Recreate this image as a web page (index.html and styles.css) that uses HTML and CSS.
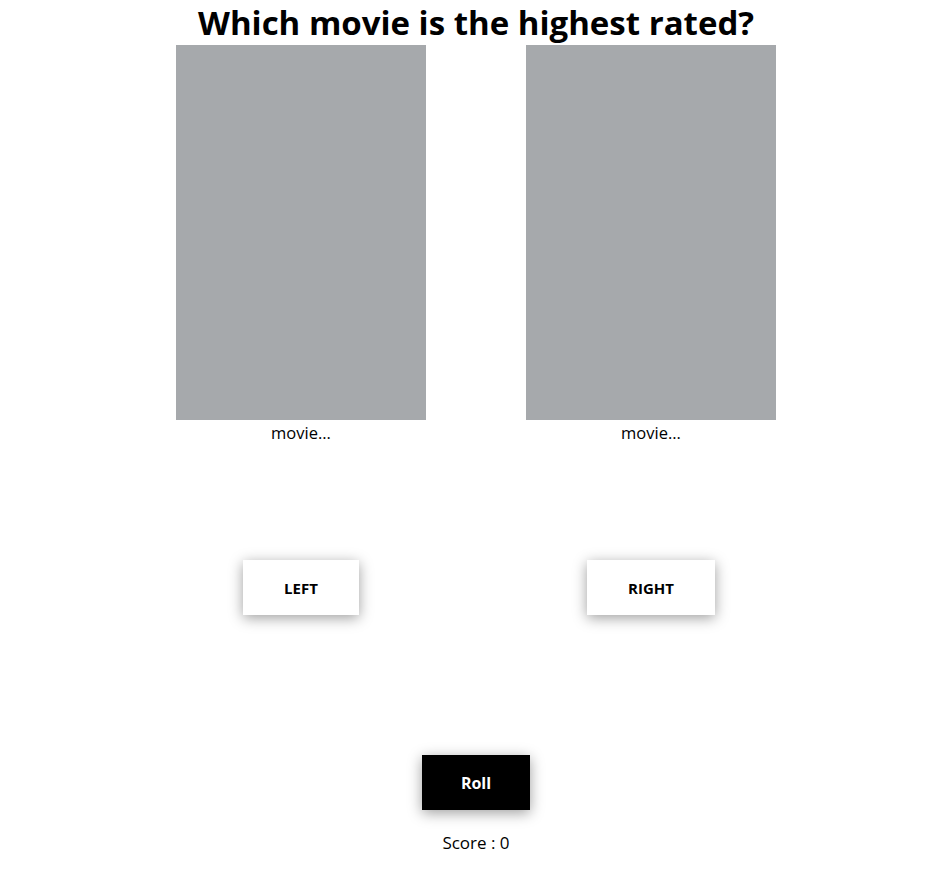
FILE: index.html
```html
<!DOCTYPE html>
<html lang="en">
<head>
<meta charset="utf-8">
<title>Which movie is the highest rated?</title>
<link rel="stylesheet" href="styles.css">
</head>
<body>
<main class="game">
  <h1 class="title">Which movie is the highest rated?</h1>
  <div class="cards">
    <div class="card">
      <div class="poster"></div>
      <p class="caption">movie...</p>
      <button class="pick">LEFT</button>
    </div>
    <div class="card">
      <div class="poster"></div>
      <p class="caption">movie...</p>
      <button class="pick">RIGHT</button>
    </div>
  </div>
  <button class="roll">Roll</button>
  <p class="score">Score : 0</p>
</main>
</body>
</html>
```

FILE: styles.css
```css
html, body {
  background: #ffffff;
}
body {
  margin: 0 0 0 8px;
  font-family: "Open Sans", "Noto Sans", sans-serif;
  color: #000;
}
.game {
  display: flex;
  flex-direction: column;
  align-items: center;
}
.title {
  margin: 0;
  font-size: 33px;
  font-weight: 700;
  line-height: 45px;
  height: 45px;
  white-space: nowrap;
}
.cards {
  display: flex;
  gap: 100px;
  justify-content: center;
}
.card {
  width: 250px;
  display: flex;
  flex-direction: column;
  align-items: center;
}
.poster {
  width: 250px;
  height: 375px;
  background: #a6a9ac;
}
.caption {
  margin: 0;
  font-size: 16.5px;
  line-height: 25px;
}
.pick {
  margin-top: 115px;
  height: 55px;
  padding: 0 41px;
  border: none;
  background: #fff;
  font-family: inherit;
  font-size: 15px;
  font-weight: 700;
  color: #000;
  box-shadow: 0 3px 13px rgba(0, 0, 0, 0.38);
  cursor: pointer;
}
.roll {
  margin-top: 140px;
  width: 108px;
  height: 55px;
  border: none;
  background: #000;
  color: #fff;
  font-family: inherit;
  font-size: 16px;
  font-weight: 700;
  box-shadow: 0 3px 13px rgba(0, 0, 0, 0.38);
  cursor: pointer;
}
.score {
  margin: 20px 0 0;
  font-size: 17px;
  line-height: 25px;
}
```
